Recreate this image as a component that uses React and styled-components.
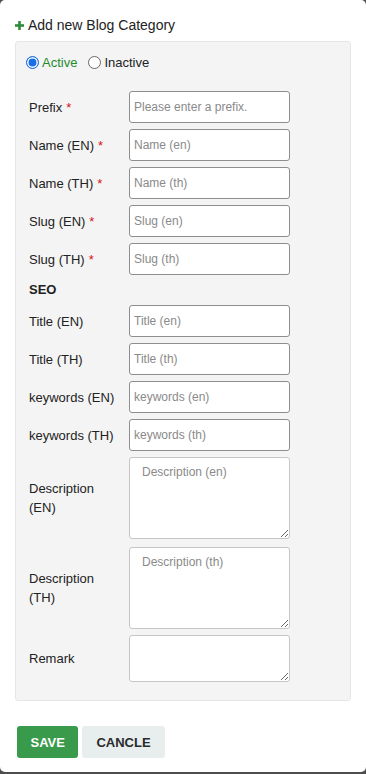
import React from "react";
import styled, { createGlobalStyle } from "styled-components";

const Global = createGlobalStyle`
  html, body { margin: 0; padding: 0; background: #4d4d4d; }
  body { font-family: "Liberation Sans", Arial, Helvetica, sans-serif; color: #222; }
  * { box-sizing: border-box; }
`;

const Modal = styled.div`
  width: 366px;
  height: 772px;
  background: #fff;
  border-radius: 5px;
  padding: 15px 15px 0 15px;
`;

const Heading = styled.h2`
  margin: 0;
  height: 20px;
  display: flex;
  align-items: center;
  gap: 4px;
  font-size: 14px;
  font-weight: 400;
  color: #222;
`;

const Panel = styled.div`
  margin-top: 6px;
  height: 660px;
  background: #f4f4f4;
  border: 1px solid #e6e6e6;
  border-radius: 3px;
  padding: 12px 13px 0 13px;
  display: flex;
  flex-direction: column;
  gap: 6px;
`;

const RadioRow = styled.div`
  display: flex;
  align-items: center;
  height: 16px;
  margin-left: -3px;
  margin-bottom: 15px;
  font-size: 13px;
`;

const RadioLabel = styled.label`
  display: flex;
  align-items: center;
  gap: 3px;
  margin-right: 11px;
  color: ${(p) => (p.$active ? "#1f8a2e" : "#222")};
`;

const Radio = styled.input.attrs({ type: "radio" })`
  appearance: none;
  margin: 0;
  width: 13px;
  height: 13px;
  border-radius: 50%;
  border: 1px solid #666;
  background: #fff;
  &:checked {
    border: 1.5px solid #1a6ee6;
    box-shadow: inset 0 0 0 1.5px #fff;
    background: #1a6ee6;
  }
`;

const Row = styled.div`
  display: flex;
  align-items: center;
  height: ${(p) => p.$h || 32}px;
  margin-top: ${(p) => p.$mt || 0}px;
`;

const Label = styled.div`
  width: 100px;
  flex: none;
  font-size: 13px;
  line-height: 19px;
  color: #222;
  padding-right: 8px;
`;

const Req = styled.span`
  color: #d9141b;
  margin-left: 4px;
`;

const Section = styled.div`
  font-size: 13px;
  font-weight: 700;
  height: 18px;
  line-height: 18px;
  color: #222;
`;

const Input = styled.input`
  width: 161px;
  height: 32px;
  border: 1px solid #8e8e8e;
  border-radius: 3px;
  background: #fff;
  padding: 0 4px;
  font-family: "Liberation Sans", Arial, sans-serif;
  font-size: 12px;
  outline: none;
  &::placeholder { color: #8a8a8a; }
`;

const Area = styled.textarea`
  width: 161px;
  height: ${(p) => p.$h}px;
  border: 1px solid #c6c6c6;
  border-radius: 3px;
  background: #fff;
  padding: 7px 12px;
  margin: 0;
  font-family: "Liberation Sans", Arial, sans-serif;
  font-size: 12px;
  outline: none;
  resize: vertical;
  display: block;
  &::placeholder { color: #8a8a8a; }
`;

const Actions = styled.div`
  display: flex;
  gap: 4px;
  margin-top: 25px;
  margin-left: 2px;
`;

const Button = styled.button`
  height: 32px;
  border: none;
  border-radius: 3px;
  padding: 0 ${(p) => (p.$primary ? 13.5 : 14)}px;
  font-family: "Liberation Sans", Arial, sans-serif;
  font-size: 13px;
  font-weight: 700;
  text-transform: uppercase;
  background: ${(p) => (p.$primary ? "#3a9a4b" : "#e8eded")};
  color: ${(p) => (p.$primary ? "#fff" : "#2a2a2a")};
`;

const Plus = () => (
  <svg width="9" height="9" viewBox="0 0 9 9">
    <rect x="3.2" y="0" width="2.6" height="9" fill="#2e8b3e" />
    <rect x="0" y="3.2" width="9" height="2.6" fill="#2e8b3e" />
  </svg>
);

const fields = [
  { label: "Prefix", ph: "Please enter a prefix.", req: true },
  { label: "Name (EN)", ph: "Name (en)", req: true },
  { label: "Name (TH)", ph: "Name (th)", req: true },
  { label: "Slug (EN)", ph: "Slug (en)", req: true },
  { label: "Slug (TH)", ph: "Slug (th)", req: true },
];

const seo = [
  { label: "Title (EN)", ph: "Title (en)" },
  { label: "Title (TH)", ph: "Title (th)" },
  { label: "keywords (EN)", ph: "keywords (en)" },
  { label: "keywords (TH)", ph: "keywords (th)" },
];

const areas = [
  { label: "Description (EN)", ph: "Description (en)", h: 82, mt: 0 },
  { label: "Description (TH)", ph: "Description (th)", h: 82, mt: 2 },
  { label: "Remark", ph: "", h: 47, mt: 0 },
];

export default function App() {
  return (
    <>
      <Global />
      <Modal>
        <Heading>
          <Plus />
          Add new Blog Category
        </Heading>
        <Panel>
          <RadioRow>
            <RadioLabel $active>
              <Radio name="status" defaultChecked />
              Active
            </RadioLabel>
            <RadioLabel>
              <Radio name="status" />
              Inactive
            </RadioLabel>
          </RadioRow>
          {fields.map((f) => (
            <Row key={f.label}>
              <Label>
                {f.label}
                {f.req && <Req>*</Req>}
              </Label>
              <Input placeholder={f.ph} />
            </Row>
          ))}
          <Section>SEO</Section>
          {seo.map((f) => (
            <Row key={f.label}>
              <Label>{f.label}</Label>
              <Input placeholder={f.ph} />
            </Row>
          ))}
          {areas.map((f) => (
            <Row key={f.label} $h={f.h} $mt={f.mt}>
              <Label>{f.label}</Label>
              <Area $h={f.h} placeholder={f.ph} />
            </Row>
          ))}
        </Panel>
        <Actions>
          <Button $primary>Save</Button>
          <Button>Cancle</Button>
        </Actions>
      </Modal>
    </>
  );
}
